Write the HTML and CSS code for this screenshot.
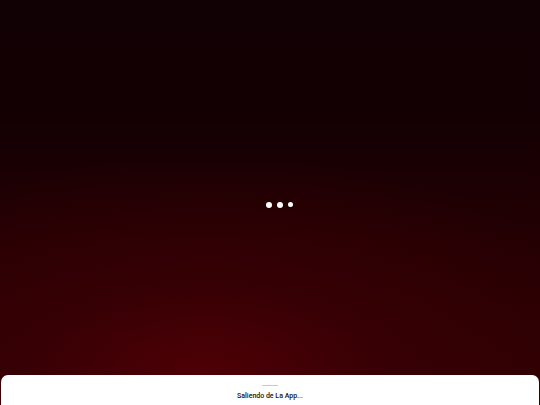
FILE: index.html
```html
<!DOCTYPE html>
<html lang="es">
<head>
    <meta charset="UTF-8">
    <meta name="viewport" content="width=device-width, initial-scale=1.0">
    <title>Saliendo</title>
    <link rel="stylesheet" href="styles.css">
</head>
<body>
    <div class="screen">
        <div class="loader">
            <span class="dot"></span>
            <span class="dot"></span>
            <span class="dot small"></span>
        </div>
    </div>
    <div class="sheet">
        <div class="handle"></div>
        <p class="sheet-text">Saliendo de La App...</p>
    </div>
</body>
</html>
```

FILE: styles.css
```css
html, body {
    height: 100%;
}
body {
    margin: 0;
    padding: 0;
    font-family: Roboto, "Noto Sans", Arial, sans-serif;
    display: flex;
    flex-direction: column;
    overflow: hidden;
    background-color: #0e0003;
    background-image:
        radial-gradient(ellipse 80% 55% at 38% 92%, rgba(80, 0, 6, 0.95) 0%, rgba(62, 0, 5, 0.65) 40%, rgba(40, 0, 4, 0) 100%),
        linear-gradient(to bottom, #110004 0%, #140003 30%, #240003 60%, #300003 100%);
}
.screen {
    flex: 1;
    display: flex;
    align-items: center;
    justify-content: center;
    padding-top: 34px;
    padding-left: 19px;
}
.loader {
    display: flex;
    align-items: center;
    gap: 5px;
}
.dot {
    width: 6px;
    height: 6px;
    border-radius: 50%;
    background: #fff;
}
.dot.small {
    width: 5px;
    height: 5px;
}
.sheet {
    height: 30px;
    margin: 0 1px;
    background: #fff;
    border-radius: 7px 7px 0 0;
    display: flex;
    flex-direction: column;
    align-items: center;
}
.handle {
    width: 16px;
    height: 1px;
    margin-top: 10px;
    background: #c8c8c8;
}
.sheet-text {
    margin: 6px 0 0;
    font-size: 7px;
    font-weight: 500;
    color: #111;
}
```
